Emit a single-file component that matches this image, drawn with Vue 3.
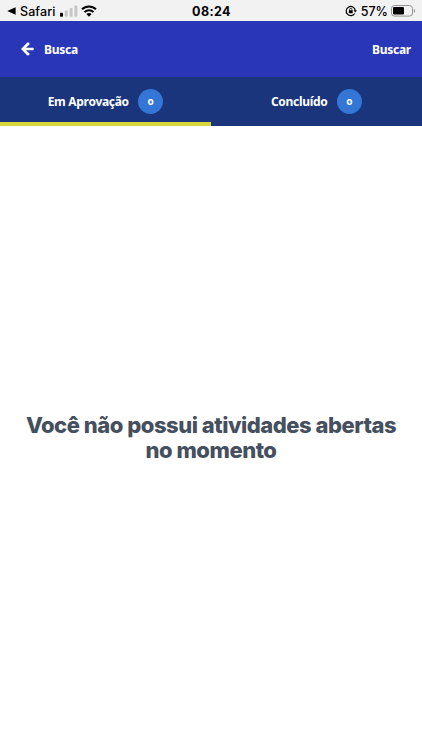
<script setup>
const tabs = [
  { label: 'Em Aprovação', count: 'o', active: true },
  { label: 'Concluído', count: 'o', active: false }
]
const message = ['Você não possui atividades abertas', 'no momento']
</script>

<template>
  <div class="screen">
    <div class="status">
      <div class="status-left">
        <svg class="caret" width="9" height="8" viewBox="0 0 9 8"><path d="M8.6 .3v7.4L.3 4z" /></svg>
        <span class="app-name">Safari</span>
        <svg class="signal" width="18" height="12" viewBox="0 0 18 12">
          <rect x="0" y="7.7" width="3" height="4" rx=".7" fill="#000" />
          <rect x="4.8" y="5.5" width="3" height="6.2" rx=".7" fill="#c7c7c7" />
          <rect x="9.6" y="3" width="3" height="8.7" rx=".7" fill="#c7c7c7" />
          <rect x="14.4" y=".5" width="3" height="11.2" rx=".7" fill="#c7c7c7" />
        </svg>
        <svg class="wifi" width="16" height="12" viewBox="0 0 16 12">
          <g fill="none" stroke="#000" stroke-width="2">
            <path d="M1 4.3a10 10 0 0 1 14 0" />
            <path d="M3.5 7.1a6.4 6.4 0 0 1 9 0" />
          </g>
          <path d="M5.4 9.1a3.8 3.8 0 0 1 5.2 0L8 11.7z" />
        </svg>
      </div>
      <span class="clock">08:24</span>
      <div class="status-right">
        <svg class="lock" width="12" height="12" viewBox="0 0 12 12">
          <path d="M9.7 8.5A4.6 4.6 0 1 1 10.3 5.3" fill="none" stroke="#000" stroke-width="1.2" />
          <path d="M8.5 5.2h3.4l-1.7 2.4z" />
          <rect x="3.8" y="5.3" width="3.9" height="3" rx=".4" />
          <path d="M4.6 5.6V4.5a1.15 1.15 0 0 1 2.3 0v1.1" fill="none" stroke="#000" stroke-width=".8" />
        </svg>
        <span class="percent">57%</span>
        <svg class="battery" width="25" height="12" viewBox="0 0 25 12">
          <rect x=".5" y=".5" width="21" height="10.6" rx="3" fill="none" stroke="#929292" />
          <rect x="2" y="2" width="11" height="7.6" rx="1.3" />
          <path d="M22.9 4v3.7c1.6-.5 1.6-3.2 0-3.7z" fill="#929292" />
        </svg>
      </div>
    </div>

    <header class="bar">
      <div class="back">
        <svg width="13" height="14" viewBox="0 0 13 14">
          <path d="M7.3 1.5 1.9 7l5.4 5.5M2.3 7H11.6" fill="none" stroke="#fff" stroke-width="2.7" />
          <circle cx="11.5" cy="7" r="1.35" fill="#fff" />
          <circle cx="7.2" cy="1.9" r="1.35" fill="#fff" />
          <circle cx="7.2" cy="12.1" r="1.35" fill="#fff" />
        </svg>
        <span class="back-label">Busca</span>
      </div>
      <span class="search">Buscar</span>
    </header>

    <nav class="tabs">
      <div v-for="tab in tabs" :key="tab.label" class="tab" :class="{ active: tab.active }">
        <span class="tab-label">{{ tab.label }}</span>
        <span class="count">{{ tab.count }}</span>
      </div>
    </nav>

    <main class="empty">
      <h1><span v-for="line in message" :key="line">{{ line }}</span></h1>
    </main>
  </div>
</template>

<style>
body {
  margin: 0;
  background: #fff;
}
</style>

<style scoped>
.screen {
  display: flex;
  flex-direction: column;
  width: 422px;
  height: 750px;
  overflow: hidden;
  background: #fff;
  font-family: "Noto Sans", sans-serif;
}
.status {
  display: grid;
  grid-template-columns: 1fr auto 1fr;
  align-items: center;
  height: 21px;
  box-sizing: border-box;
  padding: 0 6px 0 7px;
  background: #f2f2f2;
  color: #000;
  font-family: Inter, sans-serif;
  font-size: 12.5px;
  line-height: 21px;
}
.status-left,
.status-right {
  display: flex;
  align-items: center;
}
.status-right {
  justify-content: flex-end;
}
.app-name {
  margin-left: 4px;
  padding-top: 1px;
  width: 36px;
  letter-spacing: 0.1px;
  font-weight: 500;
}
.signal {
  margin-left: 4px;
}
.wifi {
  margin-left: 3px;
}
.clock {
  padding-top: 1px;
  font-weight: 700;
  font-size: 12.5px;
  letter-spacing: 0.4px;
}
.percent {
  margin: 0 3px 0 4px;
  padding-top: 1px;
  font-weight: 500;
}
.bar {
  display: flex;
  align-items: center;
  justify-content: space-between;
  height: 56px;
  box-sizing: border-box;
  padding: 0 11px 0 21px;
  background: #2936b8;
  color: #fff;
  font-size: 12px;
  font-weight: 700;
  letter-spacing: -0.25px;
}
.back {
  display: flex;
  align-items: center;
  gap: 10px;
}
.back-label {
  padding-top: 1px;
}
.tabs {
  display: grid;
  grid-template-columns: 1fr 1fr;
  height: 48.5px;
  background: #1a357c;
  color: #fff;
}
.tab {
  display: flex;
  align-items: center;
  justify-content: center;
  gap: 9px;
  border-bottom: 4.5px solid transparent;
  padding-top: 4px;
  box-sizing: border-box;
  height: 48.5px;
  font-size: 12px;
  font-weight: 700;
  letter-spacing: -0.3px;
}
.active {
  border-bottom-color: #d5d638;
}
.count {
  width: 25.5px;
  height: 25.5px;
  border-radius: 50%;
  background: #3476d5;
  font-size: 10px;
  line-height: 24px;
  text-align: center;
  letter-spacing: 0;
}
.empty {
  flex: 1;
  display: flex;
  align-items: center;
  justify-content: center;
}
h1 {
  margin: 0;
  color: #464f5e;
  font-family: Inter, sans-serif;
  font-size: 22px;
  font-weight: 800;
  line-height: 25px;
  letter-spacing: -0.48px;
  text-align: center;
}
h1 span {
  display: block;
  white-space: nowrap;
}
</style>
